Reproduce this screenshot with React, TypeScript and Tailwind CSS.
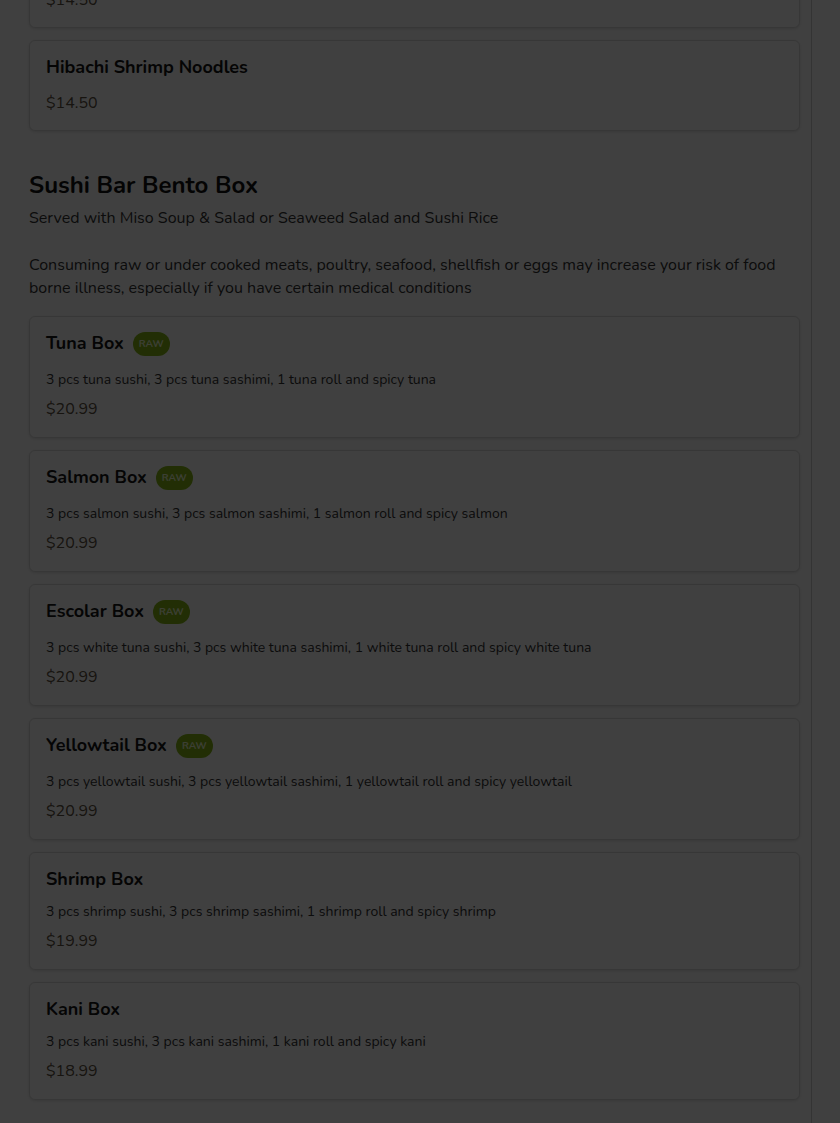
import React from "react";

type Item = { name: string; desc?: string; price: string; raw?: boolean };

const bento: Item[] = [
  { name: "Tuna Box", raw: true, desc: "3 pcs tuna sushi, 3 pcs tuna sashimi, 1 tuna roll and spicy tuna", price: "$20.99" },
  { name: "Salmon Box", raw: true, desc: "3 pcs salmon sushi, 3 pcs salmon sashimi, 1 salmon roll and spicy salmon", price: "$20.99" },
  { name: "Escolar Box", raw: true, desc: "3 pcs white tuna sushi, 3 pcs white tuna sashimi, 1 white tuna roll and spicy white tuna", price: "$20.99" },
  { name: "Yellowtail Box", raw: true, desc: "3 pcs yellowtail sushi, 3 pcs yellowtail sashimi, 1 yellowtail roll and spicy yellowtail", price: "$20.99" },
  { name: "Shrimp Box", desc: "3 pcs shrimp sushi, 3 pcs shrimp sashimi, 1 shrimp roll and spicy shrimp", price: "$19.99" },
  { name: "Kani Box", desc: "3 pcs kani sushi, 3 pcs kani sashimi, 1 kani roll and spicy kani", price: "$18.99" },
];

function Card({ item }: { item: Item }) {
  return (
    <div
      className={
        (item.desc ? "pb-4" : "pb-[15px]") +
        " rounded-md border border-[#dcdcdc] bg-white px-4 pt-4 shadow-[0_1px_3px_rgba(0,0,0,0.12)]"
      }
    >
      <div className="flex items-start gap-[9px]">
        <span className="text-[18px] font-bold leading-5 text-[#141414]">{item.name}</span>
        {item.raw && (
          <span className="-mt-px mb-px flex h-6 items-center rounded-full bg-[#86b817] px-[6px] text-[10px] font-bold uppercase leading-none text-[#eefad0]">
            Raw
          </span>
        )}
      </div>
      {item.desc && (
        <div className="mt-[13px] text-[14px] leading-5 text-[#333333]">{item.desc}</div>
      )}
      <div className={(item.desc ? "mt-[7px]" : "mt-[14px]") + " text-[16px] leading-6 text-[#5c5040]"}>{item.price}</div>
    </div>
  );
}

export default function App() {
  return (
    <div
      className="relative min-h-[1123px] w-[840px] overflow-hidden bg-white"
      style={{ fontFamily: '"Nunito", "Open Sans", "Noto Sans", sans-serif' }}
    >
      <div className="flex">
        <div className="w-[812px] border-r border-[#cfcfcf] pl-[29px] pr-[11px]">
          <div className="mt-[-63px] flex flex-col gap-3">
            <Card item={{ name: "Hibachi Chicken Noodles", price: "$14.50" }} />
            <Card item={{ name: "Hibachi Shrimp Noodles", price: "$14.50" }} />
          </div>
          <h2 className="mt-[38px] text-[24px] font-bold leading-8 text-[#111111]">Sushi Bar Bento Box</h2>
          <p className="mt-[5px] text-[16px] leading-6 text-[#333333]">
            Served with Miso Soup &amp; Salad or Seaweed Salad and Sushi Rice
          </p>
          <p className="mt-6 text-[16px] leading-[23px] text-[#333333]">
            Consuming raw or under cooked meats, poultry, seafood, shellfish or eggs may increase your risk of food
            borne illness, especially if you have certain medical conditions
          </p>
          <div className="mt-4 flex flex-col gap-3 pb-10">
            {bento.map((it) => (
              <Card key={it.name} item={it} />
            ))}
          </div>
        </div>
        <div className="flex-1 bg-white" />
      </div>
      <div className="fixed inset-0 bg-black/75" />
    </div>
  );
}
